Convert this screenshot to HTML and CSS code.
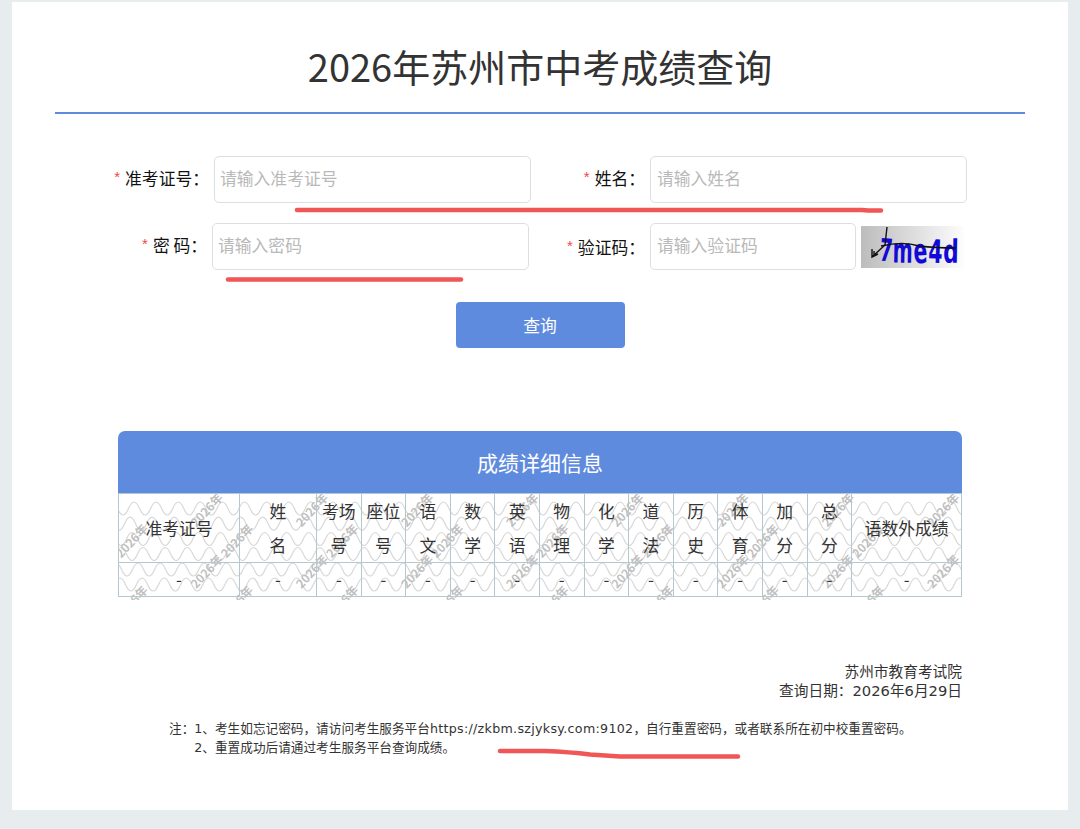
FILE: index.html
```html
<!DOCTYPE html>
<html lang="zh-CN">
<head>
    <meta charset="UTF-8">
    <meta name="viewport" content="width=device-width, initial-scale=1.0">
    <title>2026年苏州市中考成绩查询</title>
    <link rel="stylesheet" href="styles.css">
</head>
<body>
    <div class="container">
        <h1>2026年苏州市中考成绩查询</h1>

        <form class="query-form">
            <div class="form-row">
                <div class="field field-left">
                    <label for="ksh"><i>*</i>准考证号：</label>
                    <input type="text" id="ksh" placeholder="请输入准考证号">
                </div>
                <div class="field">
                    <label for="xm"><i>*</i>姓名：</label>
                    <input type="text" id="xm" placeholder="请输入姓名">
                </div>
            </div>
            <div class="form-row">
                <div class="field field-left field-pwd">
                    <label for="mm"><i>*</i>密 码：</label>
                    <input type="password" id="mm" placeholder="请输入密码">
                </div>
                <div class="field field-code">
                    <label for="yzm"><i>*</i>验证码：</label>
                    <input type="text" id="yzm" placeholder="请输入验证码">
                    <svg class="captcha" width="103" height="42" viewBox="0 0 103 42">
                        <defs>
                            <linearGradient id="captchaBg" x1="0" y1="0" x2="1" y2="0">
                                <stop offset="0" stop-color="#bcbcbc"/>
                                <stop offset="1" stop-color="#fdfdfd"/>
                            </linearGradient>
                        </defs>
                        <rect width="103" height="42" fill="url(#captchaBg)"/>
                        <g class="captcha-text">
                            <text transform="translate(18 34.5) rotate(4) scale(.6 1)">7</text>
                            <text transform="translate(31.5 36.5) rotate(1) scale(.62 1.12)">m</text>
                            <text transform="translate(53 37.5) rotate(-3) scale(.66 1.12)">e</text>
                            <text transform="translate(67 36.5) rotate(2) scale(.66 1.04)">4</text>
                            <text transform="translate(82 36.5) rotate(1) scale(.7 1.04)">d</text>
                        </g>
                        <path class="captcha-line" d="M26 1L24 19L11 31M11 23V31L17 28M13 25V29"/>
                        <path class="captcha-line" d="M20 20Q42 15 58 20Q75 22 95 22"/>
                    </svg>
                </div>
            </div>
            <button type="button" class="btn-query">查询</button>
        </form>

        <div class="result">
            <div class="result-title">成绩详细信息</div>
            <svg class="watermark" width="844" height="107">
                <path id="wave" class="wave"/>
                <g id="markText" class="mark-text"></g>
            </svg>
            <table>
                <colgroup>
                    <col class="col-ksh">
                    <col class="col-xm">
                    <col span="12" class="col-km">
                    <col>
                </colgroup>
                <thead>
                    <tr>
                        <th>准考证号</th>
                        <th>姓<br>名</th>
                        <th>考场<br>号</th>
                        <th>座位<br>号</th>
                        <th>语<br>文</th>
                        <th>数<br>学</th>
                        <th>英<br>语</th>
                        <th>物<br>理</th>
                        <th>化<br>学</th>
                        <th>道<br>法</th>
                        <th>历<br>史</th>
                        <th>体<br>育</th>
                        <th>加<br>分</th>
                        <th>总<br>分</th>
                        <th>语数外成绩</th>
                    </tr>
                </thead>
                <tbody>
                    <tr>
                        <td>-</td><td>-</td><td>-</td><td>-</td><td>-</td>
                        <td>-</td><td>-</td><td>-</td><td>-</td><td>-</td>
                        <td>-</td><td>-</td><td>-</td><td>-</td><td>-</td>
                    </tr>
                </tbody>
            </table>
        </div>

        <div class="sign">
            <p>苏州市教育考试院</p>
            <p>查询日期：2026年6月29日</p>
        </div>

        <div class="notes">
            <span>注：</span>
            <div>
                <p>1、考生如忘记密码，请访问考生服务平台<span class="url">https://zkbm.szjyksy.com:9102</span>，自行重置密码，或者联系所在初中校重置密码。</p>
                <p>2、重置成功后请通过考生服务平台查询成绩。</p>
            </div>
        </div>
    </div>

    <!-- 红色标注线 -->
    <svg class="pen" width="1080" height="829">
        <path d="M297 210H862L868 210.5H881"/>
        <path d="M228 279.5H461"/>
        <path d="M500 751H545Q570 752 590 754.5L620 756.5H738"/>
    </svg>

    <script>
        // 波浪底纹：每行 [第一个波峰x, 中线y]
        const waves = [[5, 15.5], [1, 30.7], [3, 46], [14, 61], [9, 76.5], [13, 91.5]];
        const half = 11.05;
        let d = '';
        waves.forEach(([peak, y]) => {
            d += `M${peak - half * 2.5} ${y}q${half / 2} 13 ${half} 0`;
            for (let i = 0; i < 80; i++) {
                d += `t${half} 0`;
            }
        });
        document.getElementById('wave').setAttribute('d', d);

        // 水印文字按固定间距平铺
        const g = document.getElementById('markText');
        const rows = [[92, 20], [17, 51], [92, 81.5], [17, 112.5]];
        rows.forEach(([x0, y]) => {
            for (let x = x0; x < 840; x += 105.2) {
                const t = document.createElementNS('http://www.w3.org/2000/svg', 'text');
                t.setAttribute('transform', `translate(${x} ${y}) rotate(-47)`);
                t.textContent = '2026年';
                g.appendChild(t);
            }
        });
    </script>
</body>
</html>
```
FILE: styles.css
```css
* {
    box-sizing: border-box;
}
body {
    margin: 0;
    padding: 2px 12px 19px;
    background-color: #e7edef;
    color: #333;
    font-family: "Noto Sans CJK SC", sans-serif;
}
.container {
    height: 808px;
    padding: 0 43px;
    background-color: #fff;
}
h1 {
    height: 112px;
    margin: 0;
    padding-top: 36px;
    border-bottom: 2px solid #5f8add;
    font-size: 38px;
    font-weight: 400;
    line-height: 56px;
    text-align: center;
}
.query-form {
    padding-top: 42px;
}
.form-row {
    display: flex;
    height: 47px;
    margin-bottom: 20px;
}
.field {
    display: flex;
    align-items: center;
    gap: 5px;
}
.field label {
    flex-shrink: 0;
    width: 118px;
    padding-bottom: 3px;
    color: #111;
    font-size: 16.8px;
    line-height: 24px;
    text-align: right;
    white-space: nowrap;
}
.field label i {
    margin-right: 5px;
    color: #f04844;
    font-family: "Liberation Sans", sans-serif;
    font-style: normal;
    font-size: 15px;
    line-height: 1;
    vertical-align: 3px;
}
.field-left {
    width: 472px;
}
.field-left label {
    width: 154px;
}
.field-pwd label {
    width: 152px;
}
.field-code label {
    padding: 1px 0 0;
}
.field input {
    flex-shrink: 0;
    width: 317px;
    height: 47px;
    padding: 0 6px 3px;
    border: 1px solid #dcdfe0;
    border-radius: 5px;
    background-color: #fff;
    font-family: inherit;
    font-size: 16.8px;
}
.field-left input {
    padding-left: 5px;
}
.field input::placeholder {
    color: #b9b9b9;
}
.field-code input {
    width: 206px;
}
.captcha-text {
    fill: #1208d8;
    font-family: "DejaVu Sans", sans-serif;
    font-size: 31px;
    font-weight: 700;
}
.captcha-line {
    fill: none;
    stroke: #111;
    stroke-width: 1.4;
}
.btn-query {
    display: block;
    width: 169px;
    height: 46px;
    margin: 32px auto 0;
    padding: 0;
    border: none;
    border-radius: 4px;
    background-color: #5f8bde;
    color: #fff;
    font-family: inherit;
    font-size: 16.8px;
    cursor: pointer;
}
.result {
    position: relative;
    width: 844px;
    margin: 83px auto 0;
}
.result-title {
    height: 62px;
    border-radius: 7px 7px 0 0;
    background-color: #5f8bde;
    color: #fff;
    font-size: 21px;
    line-height: 63px;
    text-align: center;
}
.watermark {
    position: absolute;
    top: 62px;
    left: 0;
}
.wave {
    fill: none;
    stroke: #d8d8d8;
    stroke-width: 1.2;
}
.mark-text {
    fill: #bfbfbf;
    font-size: 12px;
    font-weight: 700;
    text-anchor: middle;
}
table {
    position: relative;
    width: 844px;
    table-layout: fixed;
    border-collapse: collapse;
}
th, td {
    padding: 0;
    border: 1px solid #b4c8d0;
    font-size: 16.8px;
    font-weight: 400;
    text-align: center;
}
th {
    padding-top: 1px;
    line-height: 33.5px;
}
td {
    line-height: 33px;
}
.col-ksh {
    width: 121px;
}
.col-xm {
    width: 77px;
}
.col-km {
    width: 44.6px;
}
.sign {
    width: 844px;
    margin: 65px auto 0;
    font-family: "DejaVu Sans", "Noto Sans CJK SC", sans-serif;
    font-size: 14.7px;
    line-height: 19px;
    text-align: right;
}
.sign p, .notes p {
    margin: 0;
}
.notes {
    display: flex;
    margin: 19px 0 0 114px;
    font-family: "DejaVu Sans", "Noto Sans CJK SC", sans-serif;
    font-size: 12.65px;
    line-height: 19px;
    white-space: nowrap;
}
.url {
    letter-spacing: .3px;
}
.pen {
    position: absolute;
    top: 0;
    left: 0;
    pointer-events: none;
}
.pen path {
    fill: none;
    stroke: #f05656;
    stroke-width: 4.5;
    stroke-linecap: round;
    stroke-linejoin: round;
}
```
